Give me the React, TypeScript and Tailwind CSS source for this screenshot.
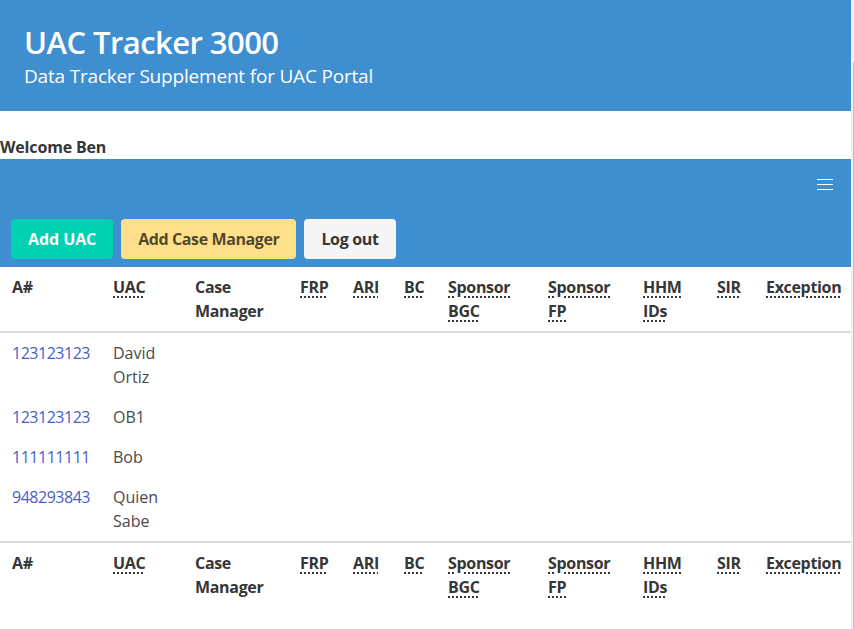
import React from "react";

const font = { fontFamily: '"Open Sans", "Noto Sans", "Liberation Sans", sans-serif' };

type Col = { label: string; abbr: boolean; w: number };

const cols: Col[] = [
  { label: "A#", abbr: false, w: 101 },
  { label: "UAC", abbr: true, w: 82 },
  { label: "Case Manager", abbr: false, w: 105 },
  { label: "FRP", abbr: true, w: 53 },
  { label: "ARI", abbr: true, w: 51 },
  { label: "BC", abbr: true, w: 44 },
  { label: "Sponsor BGC", abbr: true, w: 100 },
  { label: "Sponsor FP", abbr: true, w: 95 },
  { label: "HHM IDs", abbr: true, w: 74 },
  { label: "SIR", abbr: true, w: 49 },
  { label: "Exception", abbr: true, w: 97 },
];

const rows = [
  { a: "123123123", uac: "David Ortiz" },
  { a: "123123123", uac: "OB1" },
  { a: "111111111", uac: "Bob" },
  { a: "948293843", uac: "Quien Sabe" },
];

function HeadCells() {
  return (
    <tr>
      {cols.map((c, i) => (
        <th
          key={i}
          className="px-3 py-2 text-left align-top font-bold text-[#363636] leading-6 tracking-[-0.02em]"
        >
          {c.abbr ? (
            <abbr
              title={c.label}
              className="underline decoration-dotted decoration-[1.5px] underline-offset-[3px]"
            >
              {c.label}
            </abbr>
          ) : (
            c.label
          )}
        </th>
      ))}
    </tr>
  );
}

export default function App() {
  return (
    <div className="flex h-[629px] w-[854px] overflow-hidden bg-white" style={font}>
      <div className="w-[851px] shrink-0 text-base text-[#4a4a4a]">
        {/* Hero */}
        <section className="bg-[#3e8ed0] h-[111px] px-6 pt-[24px]">
          <h1 className="text-[31px] font-semibold leading-[36px] text-white tracking-[-0.018em]">
            UAC Tracker 3000
          </h1>
          <h2 className="mt-[4px] text-[19px] leading-[25px] text-white tracking-[-0.01em]">
            Data Tracker Supplement for UAC Portal
          </h2>
        </section>

        {/* Welcome */}
        <div className="h-[48px] pt-[24px]">
          <p className="font-bold text-[#363636] leading-6 tracking-[-0.01em]">Welcome Ben</p>
        </div>

        {/* Navbar */}
        <nav className="bg-[#3e8ed0]">
          <div className="flex h-[52px] justify-end">
            <div className="relative h-[52px] w-[52px]">
              <span className="absolute left-[18px] top-[20px] h-px w-4 bg-white" />
              <span className="absolute left-[18px] top-[25px] h-px w-4 bg-white" />
              <span className="absolute left-[18px] top-[30px] h-px w-4 bg-white" />
            </div>
          </div>
          <div className="flex gap-2 px-[11px] pt-2 pb-2">
            <button className="h-10 rounded-[4px] border border-transparent bg-[#00d1b2] px-4 font-bold text-white tracking-[-0.005em]">
              Add UAC
            </button>
            <button className="h-10 rounded-[4px] border border-transparent bg-[#ffe08a] px-4 font-bold text-[rgba(0,0,0,0.7)] tracking-[-0.025em]">
              Add Case Manager
            </button>
            <button className="h-10 rounded-[4px] border border-transparent bg-[#f5f5f5] px-4 font-bold text-[#363636] tracking-[-0.02em]">
              Log out
            </button>
          </div>
        </nav>

        {/* Table */}
        <table className="w-[851px] table-fixed border-collapse">
          <colgroup>
            {cols.map((c, i) => (
              <col key={i} style={{ width: c.w }} />
            ))}
          </colgroup>
          <thead className="border-b-2 border-[#dbdbdb]">
            <HeadCells />
          </thead>
          <tbody>
            {rows.map((r, i) => (
              <tr key={i}>
                <td className="px-3 py-2 align-top leading-6 tracking-[-0.03em]">
                  <a href="#" className="text-[#485fc7]">
                    {r.a}
                  </a>
                </td>
                <td className="px-3 py-2 align-top leading-6 text-[#4a4a4a]">{r.uac}</td>
                {cols.slice(2).map((_, j) => (
                  <td key={j} className="px-3 py-2 align-top leading-6" />
                ))}
              </tr>
            ))}
          </tbody>
          <tfoot className="border-t-2 border-[#dbdbdb]">
            <HeadCells />
          </tfoot>
        </table>
      </div>

      {/* Scrollbar strip */}
      <div className="flex h-[629px] w-[3px] shrink-0 bg-[#f1f1f1]">
        <div className="w-[2px]" />
        <div className="flex w-px flex-col">
          <div className="h-[62px]" />
          <div className="flex-1 bg-[#c1c1c1]" />
        </div>
      </div>
    </div>
  );
}
